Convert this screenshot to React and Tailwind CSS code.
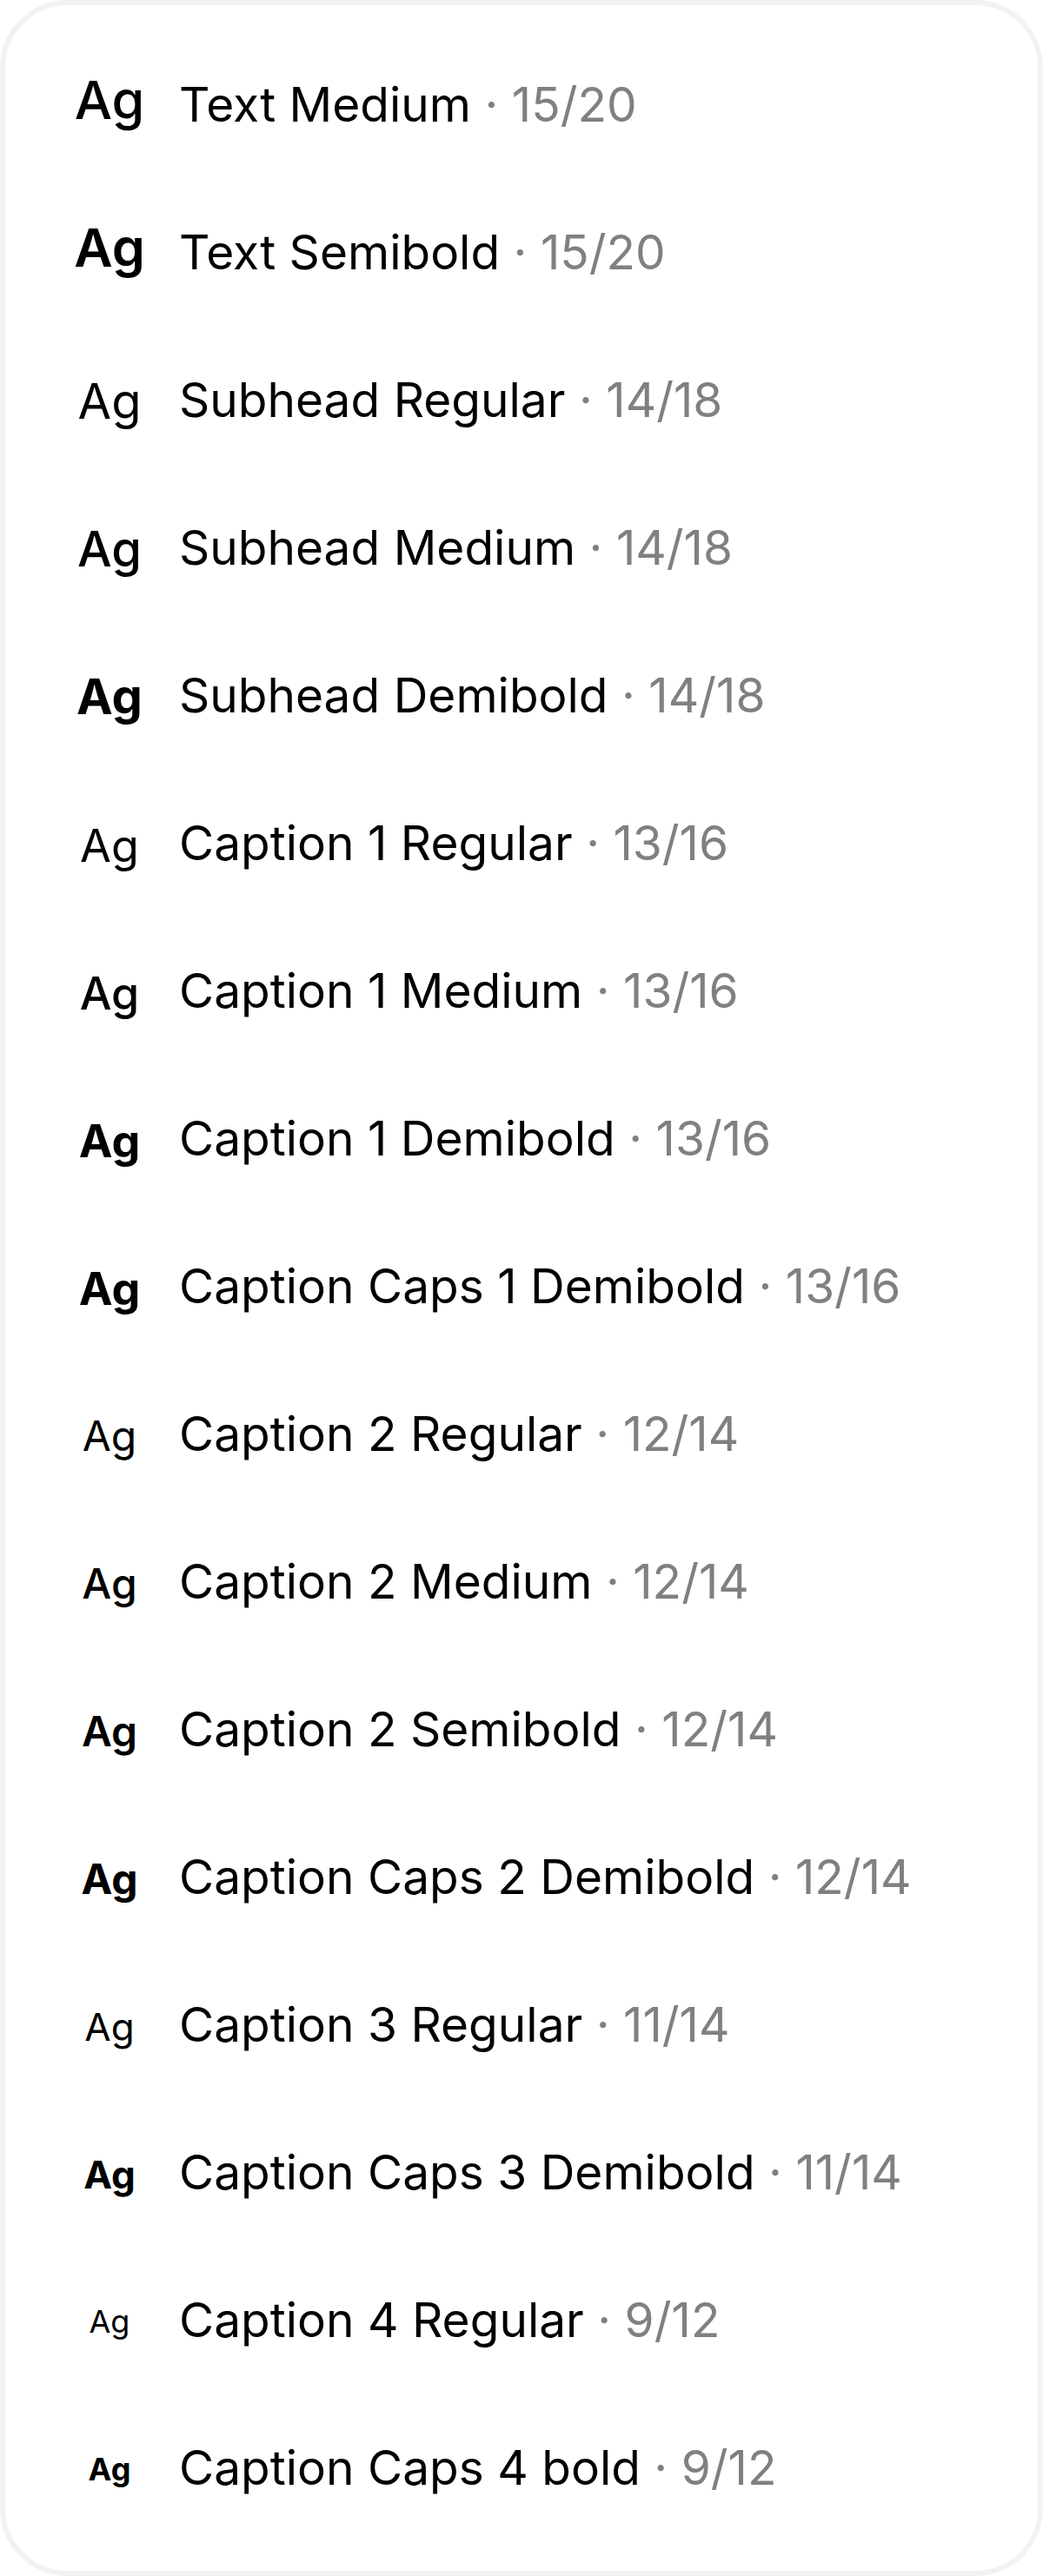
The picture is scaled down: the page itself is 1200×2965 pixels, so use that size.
const styles = [
  { name: "Text Medium", size: "15/20", ag: "text-[61px] font-medium mb-[10px]" },
  { name: "Text Semibold", size: "15/20", ag: "text-[61px] font-semibold mb-[10px]" },
  { name: "Subhead Regular", size: "14/18", ag: "text-[56px] font-normal mt-[4px]" },
  { name: "Subhead Medium", size: "14/18", ag: "text-[56px] font-medium mt-[4px]" },
  { name: "Subhead Demibold", size: "14/18", ag: "text-[56px] font-bold mt-[4px]" },
  { name: "Caption 1 Regular", size: "13/16", ag: "text-[52px] font-normal mt-[8px]" },
  { name: "Caption 1 Medium", size: "13/16", ag: "text-[52px] font-medium mt-[8px]" },
  { name: "Caption 1 Demibold", size: "13/16", ag: "text-[52px] font-bold mt-[8px]" },
  { name: "Caption Caps 1 Demibold", size: "13/16", ag: "text-[52px] font-bold mt-[8px]" },
  { name: "Caption 2 Regular", size: "12/14", ag: "text-[48px] font-normal mt-[6px]" },
  { name: "Caption 2 Medium", size: "12/14", ag: "text-[48px] font-medium mt-[6px]" },
  { name: "Caption 2 Semibold", size: "12/14", ag: "text-[48px] font-semibold mt-[6px]" },
  { name: "Caption Caps 2 Demibold", size: "12/14", ag: "text-[48px] font-bold mt-[6px]" },
  { name: "Caption 3 Regular", size: "11/14", ag: "text-[44px] font-normal mt-[6px]" },
  { name: "Caption Caps 3 Demibold", size: "11/14", ag: "text-[44px] font-bold mt-[6px]" },
  { name: "Caption 4 Regular", size: "9/12", ag: "text-[36px] font-normal mt-[4px]" },
  { name: "Caption Caps 4 bold", size: "9/12", ag: "text-[36px] font-bold mt-[4px]" },
];

const TypeRow = ({ name, size, ag }) => (
  <div className="h-[170px] flex items-center">
    <div className="w-[92px] flex justify-center">
      <span className={`leading-none text-black ${ag}`}>Ag</span>
    </div>
    <p className="ml-[34px] text-[55px] leading-none text-black whitespace-nowrap">
      {name}
      <span className="text-[#808080]"> · {size}</span>
    </p>
  </div>
);

const App = () => {
  return (
    <div className="min-h-screen bg-white font-['Inter',sans-serif]">
      <div className="h-[2965px] border-[6px] border-[#f2f2f2] rounded-[78px] bg-white pt-[29px] pl-[74px]">
        {styles.map((s) => (
          <TypeRow key={s.name} {...s} />
        ))}
      </div>
    </div>
  );
};

export default App;
